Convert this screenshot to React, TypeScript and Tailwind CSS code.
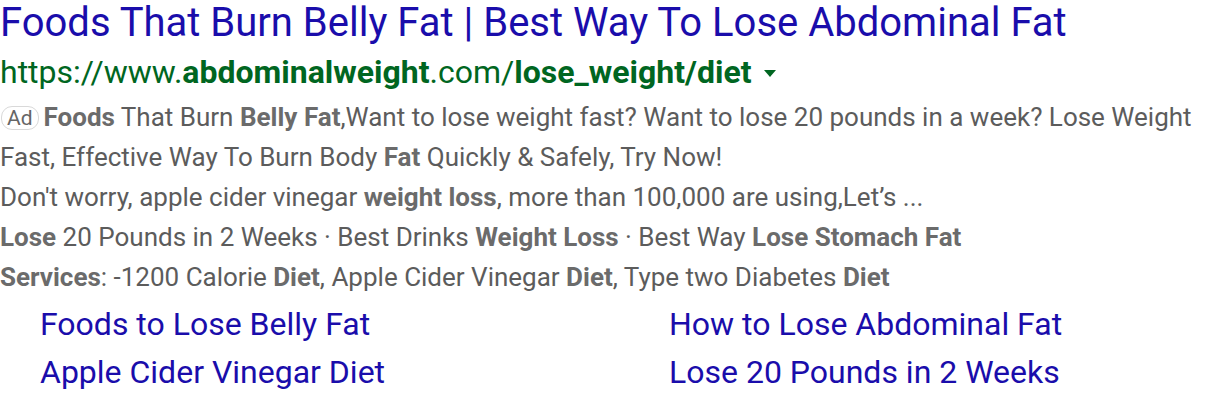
import React from 'react';

const sitelinks = [
  'Foods to Lose Belly Fat',
  'How to Lose Abdominal Fat',
  'Apple Cider Vinegar Diet',
  'Lose 20 Pounds in 2 Weeks',
];

function B({ children }: { children: React.ReactNode }) {
  return <b className="font-bold text-[#6b6b6b]">{children}</b>;
}

function App() {
  return (
    <div className="w-[1216px] h-[402px] bg-white overflow-hidden font-['Roboto',sans-serif]">
      <div className="text-[40px] leading-[45px] text-[#1a0dab] whitespace-nowrap">
        Foods That Burn Belly Fat | Best Way To Lose Abdominal Fat
      </div>
      <div className="flex items-center pt-[5px] text-[32px] leading-[44px] text-[#006621] whitespace-nowrap">
        <span>
          https://www.<b className="font-bold">abdominalweight</b>.com/<b className="font-bold">lose_weight/diet</b>
        </span>
        <span className="ml-[13px] mt-[2px] w-0 h-0 border-l-[6px] border-r-[6px] border-t-[7px] border-l-transparent border-r-transparent border-t-[#006621]" />
      </div>
      <div className="pt-[3px] text-[26px] leading-[40px] text-[#5c5c5c]">
        <p>
          <span className="inline-block align-[1px] mr-[5px] ml-[1px] px-[5px] border border-[#d9d9d9] rounded-[11px] text-[21px] leading-[22px] text-[#666]">
            Ad
          </span>
          <B>Foods</B> That Burn <B>Belly Fat</B>,Want to lose weight fast? Want to lose 20 pounds in a week? Lose Weight
          Fast, Effective Way To Burn Body <B>Fat</B> Quickly &amp; Safely, Try Now!
        </p>
        <p>
          Don't worry, apple cider vinegar <B>weight loss</B>, more than 100,000 are using,Let’s ...
        </p>
        <p>
          <B>Lose</B> 20 Pounds in 2 Weeks · Best Drinks <B>Weight Loss</B> · Best Way <B>Lose Stomach Fat</B>
        </p>
        <p>
          <B>Services</B>: -1200 Calorie <B>Diet</B>, Apple Cider Vinegar <B>Diet</B>, Type two Diabetes <B>Diet</B>
        </p>
      </div>
      <div className="grid grid-cols-[629px_1fr] mt-[3px] pl-[40px] text-[32px] leading-[48px] text-[#1a0dab]">
        {sitelinks.map((s) => (
          <a key={s} className="whitespace-nowrap">
            {s}
          </a>
        ))}
      </div>
    </div>
  );
}

export default App;
